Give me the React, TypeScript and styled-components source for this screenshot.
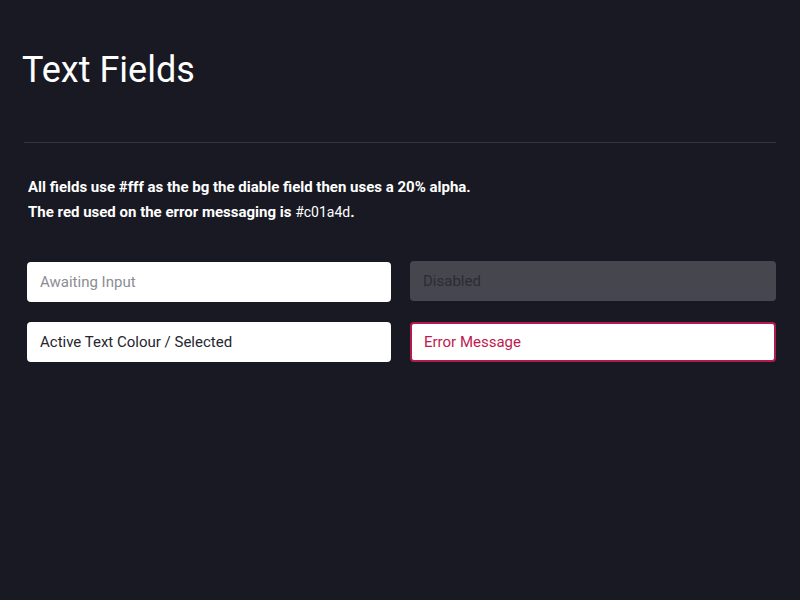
import React from 'react';
import styled, { createGlobalStyle } from 'styled-components';

const GlobalStyle = createGlobalStyle`
  html, body {
    margin: 0;
    padding: 0;
    background-color: #181922;
    font-family: Roboto, "Noto Sans", "Liberation Sans", sans-serif;
  }
`;

const Page = styled.div`
  min-height: 600px;
  padding: 0 24px;
  box-sizing: border-box;
  background-color: #181922;
`;

const Title = styled.h1`
  margin: 0;
  padding-top: 47px;
  font-size: 36px;
  font-weight: 400;
  line-height: 46px;
  color: #ffffff;
  text-indent: -2px;
`;

const Divider = styled.hr`
  margin: 49px 0 0;
  border: none;
  border-top: 1px solid #34353e;
`;

const Notes = styled.div`
  margin-top: 32px;
  padding-left: 4px;
  color: #ffffff;
  font-size: 15px;
  font-weight: 700;
  line-height: 25px;

  code {
    font-family: Roboto, "Noto Sans", sans-serif;
    font-size: 14px;
    font-weight: 400;
  }
`;

const FieldGrid = styled.div`
  display: grid;
  grid-template-columns: 364px 366px;
  column-gap: 19px;
  row-gap: 20px;
  margin-top: 37px;
  padding-left: 3px;
`;

type Variant = 'empty' | 'disabled' | 'active' | 'error';

const Field = styled.input<{ $variant: Variant }>`
  box-sizing: border-box;
  width: 100%;
  height: 40px;
  border-radius: 4px;
  font-family: Roboto, "Noto Sans", sans-serif;
  font-size: 15px;
  outline: none;
  border: ${({ $variant }) => ($variant === 'error' ? '2px solid #b01d4c' : 'none')};
  padding: 0 13px 0 ${({ $variant }) => ($variant === 'error' ? '12px' : '13px')};
  background-color: ${({ $variant }) =>
    $variant === 'disabled' ? 'rgba(255, 255, 255, 0.2)' : '#ffffff'};
  color: ${({ $variant }) =>
    $variant === 'error' ? '#c01a4d' : $variant === 'disabled' ? '#2b2c34' : '#25262e'};
  margin-top: ${({ $variant }) => ($variant === 'disabled' ? '-1px' : '0')};

  &::placeholder {
    color: ${({ $variant }) => ($variant === 'disabled' ? '#2b2c34' : '#8c8d93')};
    opacity: 1;
  }

  &:disabled {
    cursor: not-allowed;
  }
`;

export default function App() {
  return (
    <>
      <GlobalStyle />
      <Page>
        <Title>Text Fields</Title>
        <Divider />
        <Notes>
          <div>All fields use #fff as the bg the diable field then uses a 20% alpha.</div>
          <div>
            The red used on the error messaging is <code>#c01a4d</code>.
          </div>
        </Notes>
        <FieldGrid>
          <Field $variant="empty" placeholder="Awaiting Input" />
          <Field $variant="disabled" placeholder="Disabled" disabled />
          <Field $variant="active" defaultValue="Active Text Colour / Selected" />
          <Field $variant="error" defaultValue="Error Message" />
        </FieldGrid>
      </Page>
    </>
  );
}
